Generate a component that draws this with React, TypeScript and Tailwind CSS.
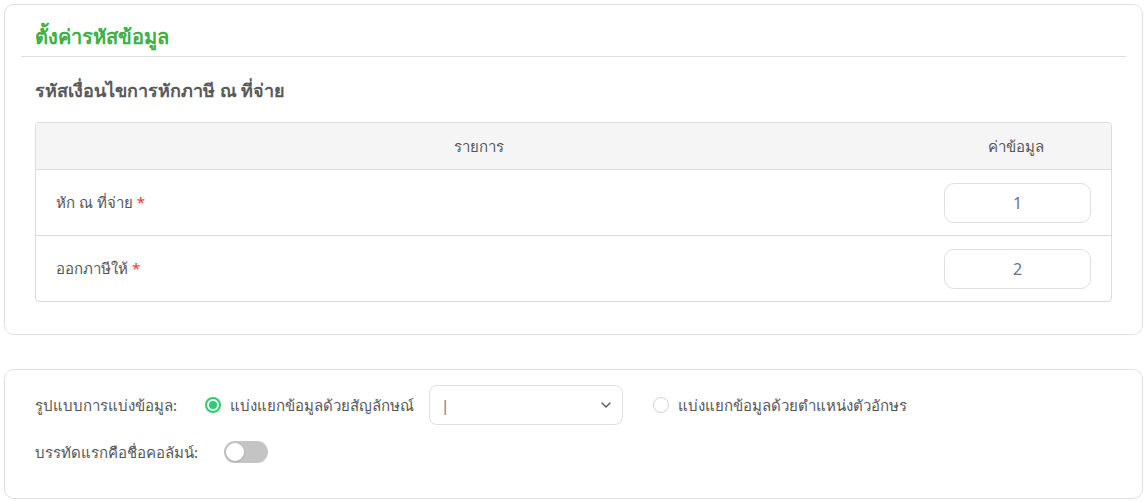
import { ChevronDown } from 'lucide-react'

const rows = [
  { label: 'หัก ณ ที่จ่าย', value: '1', h: 'h-[66px] border-b border-[#dcdcdc]' },
  { label: 'ออกภาษีให้', value: '2', h: 'h-[65px]' },
]

export default function App() {
  return (
    <div className="min-h-[501px] bg-white px-[4px] pt-[4px] text-[#555] font-['Noto_Sans','Liberation_Sans',sans-serif]">
      {/* Code settings card */}
      <section className="rounded-[10px] border border-[#e0e0e0] pb-[32px]">
        <div className="mx-[16px] border-b border-[#dedede] pl-[14px] pt-[17px] pb-[4px]">
          <h2 className="text-[20px] leading-[30px] font-semibold text-[#3cb043]">ตั้งค่ารหัสข้อมูล</h2>
        </div>
        <div className="px-[30px]">
          <h3 className="mt-[19px] mb-[18px] text-[18px] leading-[28px] font-semibold text-[#595959]">
            รหัสเงื่อนไขการหักภาษี ณ ที่จ่าย
          </h3>
          <div className="rounded-[4px] border border-[#dcdcdc] overflow-hidden text-[15px]">
            <div className="flex h-[47px] items-center bg-[#f5f5f5] border-b border-[#dcdcdc]">
              <div className="flex-1 text-center">รายการ</div>
              <div className="w-[190px] text-center">ค่าข้อมูล</div>
            </div>
            {rows.map((r) => (
              <div key={r.value} className={`flex items-center ${r.h}`}>
                <div className="flex-1 pl-[20px]">
                  {r.label} <span className="text-[#e53935]">*</span>
                </div>
                <div className="w-[190px] pl-[23px]">
                  <div className="flex h-[40px] w-[147px] items-center justify-center rounded-[10px] border border-[#dedede] text-[#6b7294] text-[16px]">
                    {r.value}
                  </div>
                </div>
              </div>
            ))}
          </div>
        </div>
      </section>

      {/* Split options card */}
      <section className="mt-[34px] rounded-[10px] border border-[#e0e0e0] px-[30px] pt-[15px] pb-[26px] text-[15px]">
        <div className="flex h-[40px] items-center">
          <span className="w-[170px]">รูปแบบการแบ่งข้อมูล:</span>
          <span className="flex h-[16px] w-[16px] items-center justify-center rounded-full border-2 border-[#2ecc71]">
            <span className="h-[8px] w-[8px] rounded-full bg-[#2ecc71]" />
          </span>
          <span className="ml-[9px]">แบ่งแยกข้อมูลด้วยสัญลักษณ์</span>
          <div className="ml-[15px] flex h-[40px] w-[194px] items-center justify-between rounded-[8px] border border-[#dedede] pl-[11px] pr-[8px]">
            <span className="text-[#6b7294]">|</span>
            <ChevronDown size={16} className="text-[#555]" />
          </div>
          <span className="ml-[30px] h-[16px] w-[16px] rounded-full border border-[#d4d4d4]" />
          <span className="ml-[9px]">แบ่งแยกข้อมูลด้วยตำแหน่งตัวอักษร</span>
        </div>
        <div className="mt-[7px] flex h-[40px] items-center">
          <span className="w-[189px]">บรรทัดแรกคือชื่อคอลัมน์:</span>
          <span className="flex h-[22px] w-[44px] items-center rounded-full bg-[#c4c4c4] px-[2px]">
            <span className="h-[18px] w-[18px] rounded-full bg-white shadow" />
          </span>
        </div>
      </section>
    </div>
  )
}
